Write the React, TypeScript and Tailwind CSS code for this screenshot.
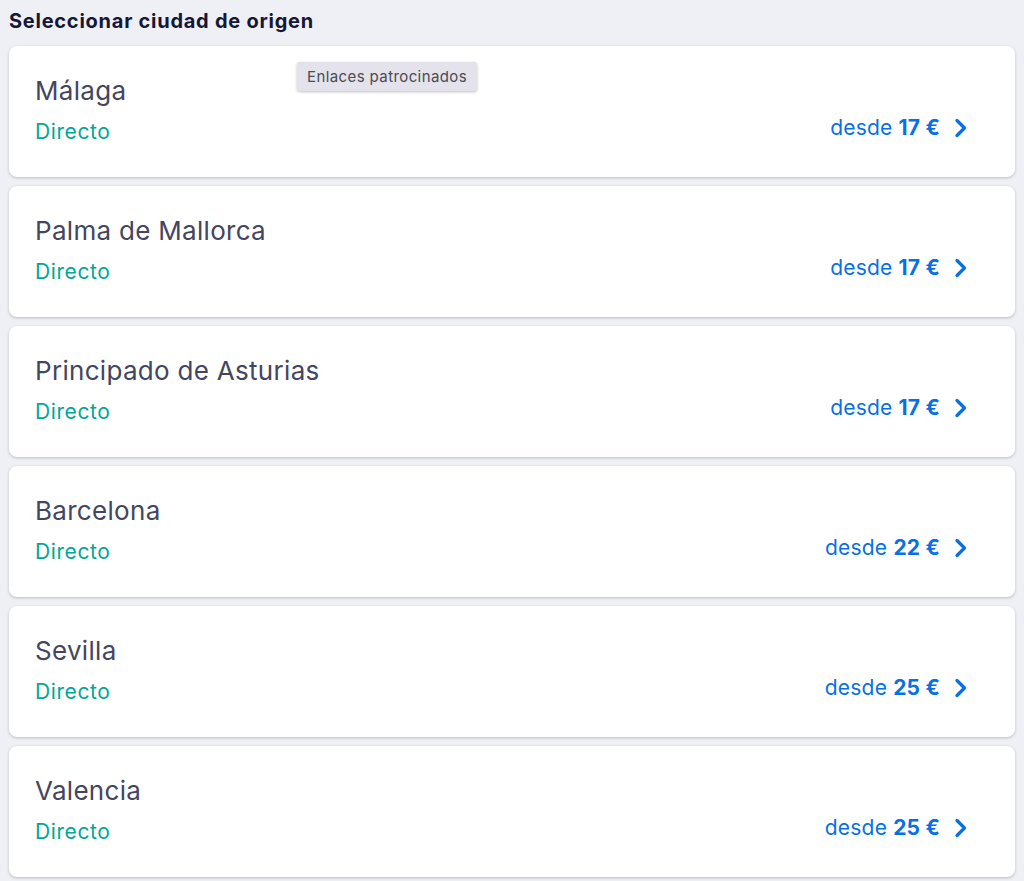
const cities = [
  { name: "Málaga", price: 17 },
  { name: "Palma de Mallorca", price: 17 },
  { name: "Principado de Asturias", price: 17 },
  { name: "Barcelona", price: 22 },
  { name: "Sevilla", price: 25 },
  { name: "Valencia", price: 25 },
];

function Chevron() {
  return (
    <svg width="14" height="20" viewBox="0 0 14 20" fill="none" className="shrink-0">
      <path
        d="M3 2.5 L10.5 10 L3 17.5"
        stroke="currentColor"
        strokeWidth="3.2"
        strokeLinecap="round"
        strokeLinejoin="round"
      />
    </svg>
  );
}

export default function App() {
  return (
    <div
      className="min-h-[881px] bg-[#eff0f6] px-[9px] pt-[8px]"
      style={{ fontFamily: "Inter, 'Noto Sans', sans-serif" }}
    >
      <h2 className="text-[20px] font-bold leading-[26px] text-[#161637] tracking-[0.75px]">
        Seleccionar ciudad de origen
      </h2>
      <div className="mt-[12px] flex flex-col gap-[9px]">
        {cities.map((c, i) => (
          <div
            key={c.name}
            className="relative flex h-[131px] items-start justify-between rounded-[8px] bg-white pl-[26px] pr-[47px] pt-[28px] shadow-[0_1px_3px_rgba(37,32,31,0.25)]"
          >
            <div className="flex flex-col">
              <span className="text-[26px] leading-[34px] text-[#444560] tracking-[0.3px]">{c.name}</span>
              <span className="mt-[11px] text-[21px] leading-[26px] text-[#00a698] tracking-[0.6px]">Directo</span>
            </div>
            <div className="mt-[41px] flex h-[26px] items-center gap-[14px] text-[#0770e3]">
              <span className="text-[21px] leading-[26px] tracking-[0.2px]">
                desde <span className="font-bold">{c.price} €</span>
              </span>
              <Chevron />
            </div>
            {i === 0 && (
              <div className="absolute left-[288px] top-[16px] rounded-[3px] bg-[#e4e2ea] px-[10px] py-[5px] text-[15px] leading-[19px] text-[#4a4a52] tracking-[0.4px] shadow-[0_1px_3px_rgba(0,0,0,0.25)]">
                Enlaces patrocinados
              </div>
            )}
          </div>
        ))}
      </div>
    </div>
  );
}
